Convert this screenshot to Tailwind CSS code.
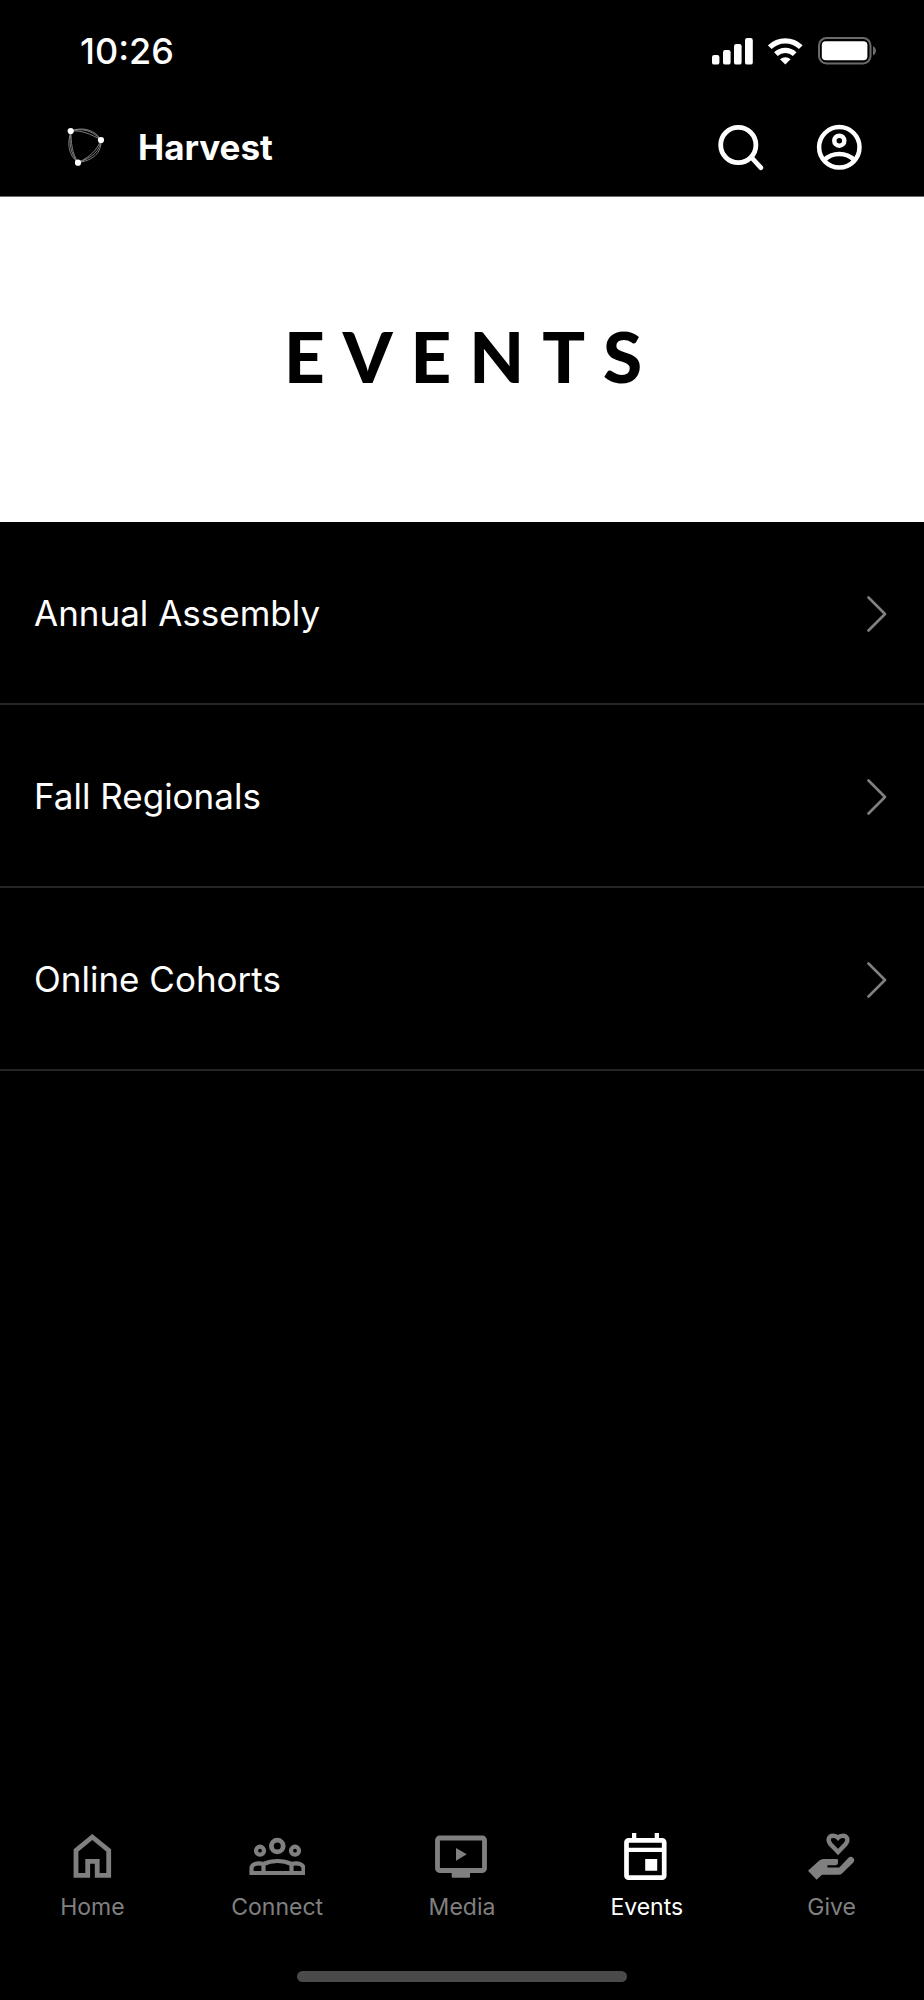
<!DOCTYPE html>
<html lang="en">
<head>
    <meta charset="UTF-8">
    <meta name="viewport" content="width=device-width, initial-scale=1.0">
    <script src="https://cdn.jsdelivr.net/npm/@tailwindcss/browser@4"></script>
    <title>Harvest - Events</title>
</head>
<body class="flex flex-col min-h-screen bg-black text-white font-['Inter',sans-serif]">

    <!-- Status bar -->
    <div class="flex items-center justify-between pl-20 pr-12 py-[31px]">
        <span class="text-[36px] leading-10 font-medium">10:26</span>
        <div class="flex items-center">
            <svg class="w-[41px] h-[27px] mr-[15px]" viewBox="0 0 41 27" fill="currentColor">
                <rect x="0" y="17" width="7.4" height="9.6" rx="2.2"/>
                <rect x="11" y="12" width="7.6" height="14.6" rx="2.2"/>
                <rect x="22" y="6" width="7.6" height="20.6" rx="2.2"/>
                <rect x="33" y="0" width="7.8" height="26.6" rx="2.2"/>
            </svg>
            <svg class="w-[35px] h-[27px] mr-[15px]" viewBox="0 0 35 27" fill="none" stroke="currentColor" stroke-width="5.2">
                <path d="M1.8 9.2a22 22 0 0 1 31 0"/>
                <path d="M7.9 16.2a13.5 13.5 0 0 1 18.8 0"/>
                <path d="M12 21.3a8 8 0 0 1 10.6 0L17.3 26.6z" fill="currentColor" stroke="none"/>
            </svg>
            <svg class="w-[58px] h-[28px]" viewBox="0 0 58 28">
                <rect x="1" y="1" width="51.5" height="25.5" rx="7.5" fill="none" stroke="#6b6b6b" stroke-width="2"/>
                <rect x="3.8" y="4.2" width="45.6" height="19" rx="4" fill="#fff"/>
                <path d="M55 9.2c4 1.8 4 7.4 0 9.2z" fill="#6b6b6b"/>
            </svg>
        </div>
    </div>

    <!-- Header -->
    <header class="flex items-center pl-16 pr-[60px] pt-[21px] pb-[25px] border-b border-[#6b6b6b]">
        <svg class="w-12 h-12 mr-[26px]" viewBox="0 0 48 48" fill="none" stroke="#9a9a9a" stroke-width=".8">
            <path d="M7 8C18 5 28 7 37 17M7 8C20 3 32 8 37 17M7 8C17 7 27 11 37 17"/>
            <path d="M37 17C36 28 28 35 14 39.5M37 17C38 30 28 38 14 39.5M37 17C33 27 26 34 14 39.5"/>
            <path d="M14 39.5C4 32 3 20 7 8M14 39.5C6 30 5 20 7 8M14 39.5C8 30 7 20 7 8"/>
            <g fill="#fff" stroke="none">
                <circle cx="6.7" cy="8" r="3.1"/>
                <circle cx="37" cy="17" r="3.1"/>
                <circle cx="14" cy="39.7" r="3.1"/>
            </g>
        </svg>
        <span class="flex-1 text-[35px] leading-10 font-bold">Harvest</span>
        <button type="button" aria-label="Search" class="mr-[52px]">
            <svg class="w-12 h-12" viewBox="0 0 48 48" fill="none" stroke="currentColor" stroke-width="4.8" stroke-linecap="round">
                <circle cx="22.3" cy="22" r="17.6"/>
                <path d="M35.5 34.5L44.8 44.7"/>
            </svg>
        </button>
        <button type="button" aria-label="Account">
            <svg class="w-12 h-12" viewBox="0 0 48 48" fill="none" stroke="currentColor" stroke-width="4.5">
                <circle cx="23.3" cy="24.3" r="20.2"/>
                <circle cx="23.3" cy="17.7" r="5"/>
                <path d="M8.5 37C16 29 30.6 29 38 37"/>
            </svg>
        </button>
    </header>

    <main class="flex-1">
        <!-- Banner -->
        <div class="flex items-center justify-center h-[325px] pb-2 bg-white text-black">
            <h1 class="pl-5 font-['Lato',sans-serif] text-[71px] leading-20 font-black tracking-[18px]">EVENTS</h1>
        </div>

        <!-- Event list -->
        <ul>
            <li class="border-b-2 border-[#262626]">
                <a href="#" class="flex items-center justify-between pl-[34px] pr-[37px] pt-[71px] pb-[69px]">
                    <span class="text-[35px] leading-[41px]">Annual Assembly</span>
                    <svg class="w-5 h-9" viewBox="0 0 20 36" fill="none" stroke="#808080" stroke-width="2.6" stroke-linecap="round" stroke-linejoin="round"><path d="M1.5 1.5L18 18L1.5 34.5"/></svg>
                </a>
            </li>
            <li class="border-b-2 border-[#262626]">
                <a href="#" class="flex items-center justify-between pl-[34px] pr-[37px] pt-[71px] pb-[69px]">
                    <span class="text-[35px] leading-[41px]">Fall Regionals</span>
                    <svg class="w-5 h-9" viewBox="0 0 20 36" fill="none" stroke="#808080" stroke-width="2.6" stroke-linecap="round" stroke-linejoin="round"><path d="M1.5 1.5L18 18L1.5 34.5"/></svg>
                </a>
            </li>
            <li class="border-b-2 border-[#262626]">
                <a href="#" class="flex items-center justify-between pl-[34px] pr-[37px] pt-[71px] pb-[69px]">
                    <span class="text-[35px] leading-[41px]">Online Cohorts</span>
                    <svg class="w-5 h-9" viewBox="0 0 20 36" fill="none" stroke="#808080" stroke-width="2.6" stroke-linecap="round" stroke-linejoin="round"><path d="M1.5 1.5L18 18L1.5 34.5"/></svg>
                </a>
            </li>
        </ul>
    </main>

    <!-- Tab bar -->
    <nav class="grid grid-cols-5 text-[23px] leading-7 text-[#808080]">
        <a href="#" class="flex flex-col items-center gap-3">
            <svg class="w-14 h-12" viewBox="0 0 56 48" fill="none" stroke="currentColor" stroke-width="4.8">
                <path d="M28.3 4L44.7 17.5V42.4H33.2V28.3H23.7V42.4H12V17.5Z"/>
            </svg>
            <span>Home</span>
        </a>
        <a href="#" class="flex flex-col items-center gap-3">
            <svg class="w-14 h-12" viewBox="0 0 56 48" fill="none" stroke="currentColor" stroke-width="4.2">
                <circle cx="28.3" cy="13" r="5.9" stroke-width="4.8"/>
                <circle cx="11" cy="17.7" r="4"/>
                <circle cx="46" cy="17.7" r="4"/>
                <path d="M14.5 40V31C23 27 34 27 42.5 31V40"/>
                <path d="M14.5 31C7 29 2.5 32 2.5 35V40H54.5V35C54.5 32 50 29 42.5 31"/>
            </svg>
            <span>Connect</span>
        </a>
        <a href="#" class="flex flex-col items-center gap-3">
            <svg class="w-14 h-12" viewBox="0 0 56 48">
                <rect x="3.5" y="5" width="47" height="32.5" rx="2" fill="none" stroke="currentColor" stroke-width="4.8"/>
                <path d="M17.7 38H36V43.7Q36 44.7 35 44.7H18.7Q17.7 44.7 17.7 43.7Z" fill="currentColor"/>
                <path d="M22 14.9L32.8 21.3L22 27.7Z" fill="currentColor"/>
            </svg>
            <span>Media</span>
        </a>
        <a href="#" aria-current="page" class="flex flex-col items-center gap-3 text-white">
            <svg class="w-14 h-12" viewBox="0 0 56 48">
                <rect x="7.5" y="7.3" width="37.7" height="37.4" rx="2" fill="none" stroke="currentColor" stroke-width="4.7"/>
                <path d="M13 0H17.3V6H13ZM35.7 0H40V6H35.7ZM8 14.7H45V19H8ZM26.2 26H38.2V37.8H26.2Z" fill="currentColor"/>
            </svg>
            <span>Events</span>
        </a>
        <a href="#" class="flex flex-col items-center gap-3">
            <svg class="w-14 h-12" viewBox="0 0 56 48">
                <path d="M34 19L26.5 11.2C22.5 6.5 25.5 2.7 29 2.7C31.5 2.7 33 3.7 34 4.8C35 3.7 36.5 2.7 39 2.7C42.5 2.7 45.5 6.5 41.5 11.2Z" fill="none" stroke="currentColor" stroke-width="4.4"/>
                <path d="M4 37.8L12.6 46.7L18 41.8H34.5Q36.5 41.8 38 40.5L49.3 29.5Q51.2 27 49.3 25Q46.8 22.7 44.5 24.8L35.3 34.4H23.4V32.3H31Q34 32.3 34 29.5V27Q34 26 33 26H19.5Q17 26 15 27.7Z" fill="currentColor"/>
            </svg>
            <span>Give</span>
        </a>
    </nav>

    <!-- Home indicator -->
    <div class="self-center w-[330px] h-[11px] mt-[50px] mb-[18px] rounded-full bg-[#4a4a4a]"></div>

</body>
</html>
